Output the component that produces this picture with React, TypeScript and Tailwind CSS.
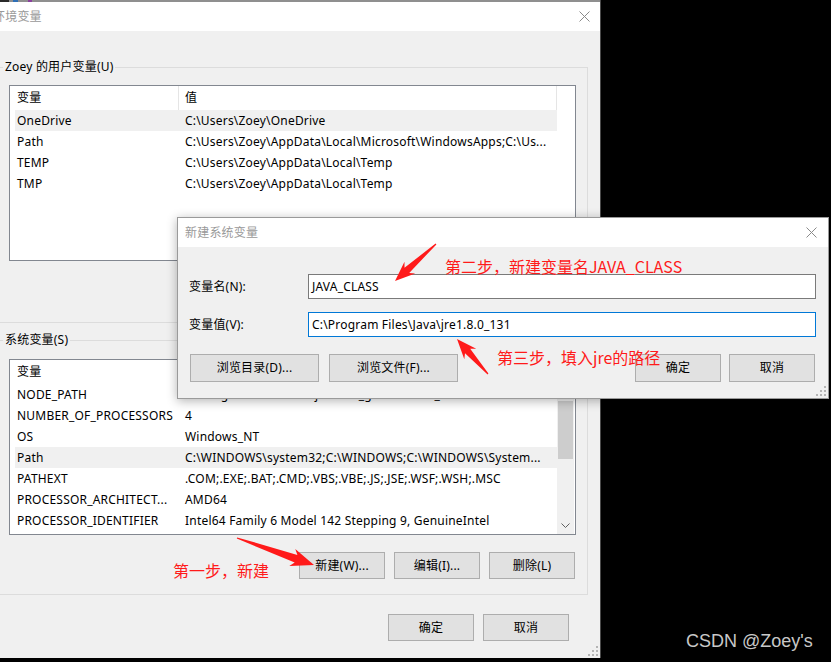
import React from 'react';

const USER_VARS = [
  { name: 'OneDrive', value: 'C:\\Users\\Zoey\\OneDrive', selected: true },
  { name: 'Path', value: 'C:\\Users\\Zoey\\AppData\\Local\\Microsoft\\WindowsApps;C:\\Us...' },
  { name: 'TEMP', value: 'C:\\Users\\Zoey\\AppData\\Local\\Temp' },
  { name: 'TMP', value: 'C:\\Users\\Zoey\\AppData\\Local\\Temp' },
];

const SYS_VARS = [
  { name: 'NODE_PATH', value: 'C:\\Program Files\\nodejs\\node_global\\node_modules' },
  { name: 'NUMBER_OF_PROCESSORS', value: '4' },
  { name: 'OS', value: 'Windows_NT' },
  { name: 'Path', value: 'C:\\WINDOWS\\system32;C:\\WINDOWS;C:\\WINDOWS\\System...', selected: true },
  { name: 'PATHEXT', value: '.COM;.EXE;.BAT;.CMD;.VBS;.VBE;.JS;.JSE;.WSF;.WSH;.MSC' },
  { name: 'PROCESSOR_ARCHITECT...', value: 'AMD64' },
  { name: 'PROCESSOR_IDENTIFIER', value: 'Intel64 Family 6 Model 142 Stepping 9, GenuineIntel' },
];

const CloseX = () => (
  <svg width="11" height="11" viewBox="0 0 11 11" className="shrink-0">
    <path d="M0.5 0.5 L10.5 10.5 M10.5 0.5 L0.5 10.5" stroke="#8a8a8a" strokeWidth="1" />
  </svg>
);

const Grip = () => (
  <svg width="11" height="11" viewBox="0 0 11 11">
    {[[8, 0], [8, 4], [4, 4], [8, 8], [4, 8], [0, 8]].map(([x, y], i) => (
      <rect key={i} x={x} y={y} width="2" height="2" fill="#b5b5b5" />
    ))}
  </svg>
);

const Btn = ({ label, w = 'w-[86px]', h = 'h-[27px]' }: { label: string; w?: string; h?: string }) => (
  <div className={`${w} ${h} flex shrink-0 items-center justify-center border border-[#adadad] bg-[#e1e1e1]`}>{label}</div>
);

const Header = () => (
  <div className="ml-[5px] flex h-[24px] w-[542px] shrink-0 items-center border-r border-[#e5e5e5]">
    <div className="flex h-full w-[164px] items-center border-r border-[#e5e5e5] pl-[2px]">变量</div>
    <div className="pl-[6px]">值</div>
  </div>
);

const Row = ({ name, value, selected }: { name: string; value: string; selected?: boolean }) => (
  <div className={`ml-[5px] flex h-[21px] w-[542px] shrink-0 items-center ${selected ? 'bg-[#f0f0f0]' : ''}`}>
    <div className="w-[164px] shrink-0 overflow-hidden whitespace-nowrap pl-[2px]">{name}</div>
    <div className="flex-1 overflow-hidden whitespace-nowrap pl-[6px]">{value}</div>
  </div>
);

const ButtonRow = () => (
  <div className="mt-[18px] flex justify-end gap-[9px] pr-[1px]">
    <Btn label="新建(W)..." />
    <Btn label="编辑(I)..." />
    <Btn label="删除(L)" />
  </div>
);

function arrow(tx: number, ty: number, hx: number, hy: number, hl: number, hw: number, sw: number) {
  const len = Math.hypot(hx - tx, hy - ty);
  const ux = (hx - tx) / len, uy = (hy - ty) / len;
  const px = -uy, py = ux;
  const bx = hx - ux * hl, by = hy - uy * hl;
  const wx = hx - ux * (hl + 4), wy = hy - uy * (hl + 4);
  const pts = [
    [tx + px * 0.6, ty + py * 0.6],
    [bx + px * sw, by + py * sw],
    [wx + px * hw, wy + py * hw],
    [hx, hy],
    [wx - px * hw, wy - py * hw],
    [bx - px * sw, by - py * sw],
    [tx - px * 0.6, ty - py * 0.6],
  ];
  return pts.map(p => p.map(v => v.toFixed(1)).join(',')).join(' ');
}

export default function App() {
  return (
    <div className="relative h-[662px] w-[831px] overflow-hidden bg-black font-['Noto_Sans','Noto_Sans_CJK_SC',sans-serif] text-[12px] leading-[16px] tracking-[0.2px] text-black">
      {/* 环境变量 main window */}
      <div className="flex h-[658px] w-[601px] flex-col border-r border-[#4a4a4a] bg-[#f0f0f0]">
        <div className="flex h-[2px] shrink-0 bg-[#8f8f8f]">
          <div className="w-[9px] bg-[#2a2a2a]" />
          <div className="ml-[4px] w-[5px] bg-[#2f6fb5]" />
          <div className="ml-[10px] w-[4px] bg-[#8a3f9e]" />
        </div>
        <div className="flex h-[29px] shrink-0 items-center justify-between bg-white pr-[10px] text-[#999]">
          <span className="ml-[-7px]">环境变量</span>
          <CloseX />
        </div>

        <div className="flex flex-1 flex-col pt-[28px]">
          <fieldset className="ml-[-4px] w-[592px] border border-[#dcdcdc] pb-[16px] pl-[6px] pr-[11px] pt-[10px]">
            <legend className="px-[2px] leading-[16px]">Zoey 的用户变量(U)</legend>
            <div className="ml-[6px] flex h-[176px] flex-col border border-[#828790] bg-white">
              <Header />
              {USER_VARS.map(v => <Row key={v.name} {...v} />)}
            </div>
            <ButtonRow />
          </fieldset>

          <fieldset className="ml-[-4px] mt-[9px] w-[592px] border border-[#dcdcdc] pb-[15px] pl-[6px] pr-[11px] pt-[11px]">
            <legend className="px-[2px] leading-[16px]">系统变量(S)</legend>
            <div className="ml-[6px] flex h-[176px] border border-[#828790] bg-white">
              <div className="flex w-[547px] flex-col">
                <Header />
                {SYS_VARS.map(v => <Row key={v.name} {...v} />)}
              </div>
              <div className="flex w-[17px] flex-col bg-[#f0f0f0]">
                <div className="flex h-[17px] items-center justify-center">
                  <svg width="9" height="5" viewBox="0 0 9 5"><path d="M0.5 4.5 L4.5 0.5 L8.5 4.5" stroke="#606060" fill="none" /></svg>
                </div>
                <div className="flex-1 px-[1px]">
                  <div className="mt-[24px] h-[58px] bg-[#cdcdcd]" />
                </div>
                <div className="flex h-[17px] items-center justify-center">
                  <svg width="9" height="5" viewBox="0 0 9 5"><path d="M0.5 0.5 L4.5 4.5 L8.5 0.5" stroke="#606060" fill="none" /></svg>
                </div>
              </div>
            </div>
            <div className="mt-[17px] flex justify-end gap-[9px] pr-[1px]">
              <Btn label="新建(W)..." />
              <Btn label="编辑(I)..." />
              <Btn label="删除(L)" />
            </div>
          </fieldset>

          <div className="mt-[19px] flex justify-end gap-[9px] pr-[31px]">
            <Btn label="确定" />
            <Btn label="取消" />
          </div>
          <div className="mt-auto flex justify-end pb-[1px] pr-[1px]">
            <Grip />
          </div>
        </div>
      </div>

      {/* 新建系统变量 dialog */}
      <div className="absolute left-[177px] top-[217px] flex h-[182px] w-[652px] flex-col border border-[#9a9a9a] bg-[#f0f0f0] shadow-[0_2px_10px_rgba(0,0,0,0.3)]">
        <div className="flex h-[29px] shrink-0 items-center justify-between bg-white pl-[7px] pr-[11px] text-[#999]">
          <span>新建系统变量</span>
          <CloseX />
        </div>
        <div className="flex flex-col pl-[11px] pr-[12px] pt-[27px]">
          <div className="flex items-center">
            <span className="w-[119px] shrink-0">变量名(N):</span>
            <div className="flex h-[25px] flex-1 items-center border border-[#7a7a7a] bg-white pl-[3px]">JAVA_CLASS</div>
          </div>
          <div className="mt-[13px] flex items-center">
            <span className="w-[119px] shrink-0">变量值(V):</span>
            <div className="flex h-[25px] flex-1 items-center border border-[#0078d7] bg-white pl-[3px]">C:\Program Files\Java\jre1.8.0_131</div>
          </div>
          <div className="mt-[17px] flex items-center pl-[1px] pr-[1px]">
            <Btn label="浏览目录(D)..." w="w-[129px]" h="h-[28px]" />
            <div className="ml-[10px]"><Btn label="浏览文件(F)..." w="w-[129px]" h="h-[28px]" /></div>
            <div className="flex-1" />
            <Btn label="确定" h="h-[28px]" />
            <div className="ml-[8px]"><Btn label="取消" h="h-[28px]" /></div>
          </div>
        </div>
        <div className="mt-auto flex justify-end pb-[1px] pr-[1px]">
          <Grip />
        </div>
      </div>

      {/* annotations */}
      <svg className="pointer-events-none absolute left-0 top-0" width="831" height="662">
        <polygon points={arrow(436, 244, 395, 281, 16, 8, 3.5)} fill="#ff1a1a" />
        <polygon points={arrow(488, 374, 457, 339, 16, 8, 3.5)} fill="#ff1a1a" />
        <polygon points={arrow(237, 538, 314, 565, 19, 9, 4)} fill="#ff1a1a" />
      </svg>
      <div className="absolute left-[445px] top-[256px] whitespace-nowrap font-['Noto_Sans_CJK_SC',sans-serif] text-[16px] leading-[20px] tracking-normal text-[#ff1a1a]">第二步，新建变量名JAVA_CLASS</div>
      <div className="absolute left-[497px] top-[347px] whitespace-nowrap font-['Noto_Sans_CJK_SC',sans-serif] text-[16px] leading-[20px] tracking-normal text-[#ff1a1a]">第三步，填入jre的路径</div>
      <div className="absolute left-[173px] top-[560px] whitespace-nowrap font-['Noto_Sans_CJK_SC',sans-serif] text-[16px] leading-[20px] tracking-normal text-[#ff1a1a]">第一步，新建</div>

      <div className="absolute left-[686px] top-[630px] whitespace-nowrap font-['Liberation_Sans',sans-serif] text-[18px] leading-[22px] tracking-normal text-[#c8c8c8]">CSDN @Zoey's</div>
    </div>
  );
}
